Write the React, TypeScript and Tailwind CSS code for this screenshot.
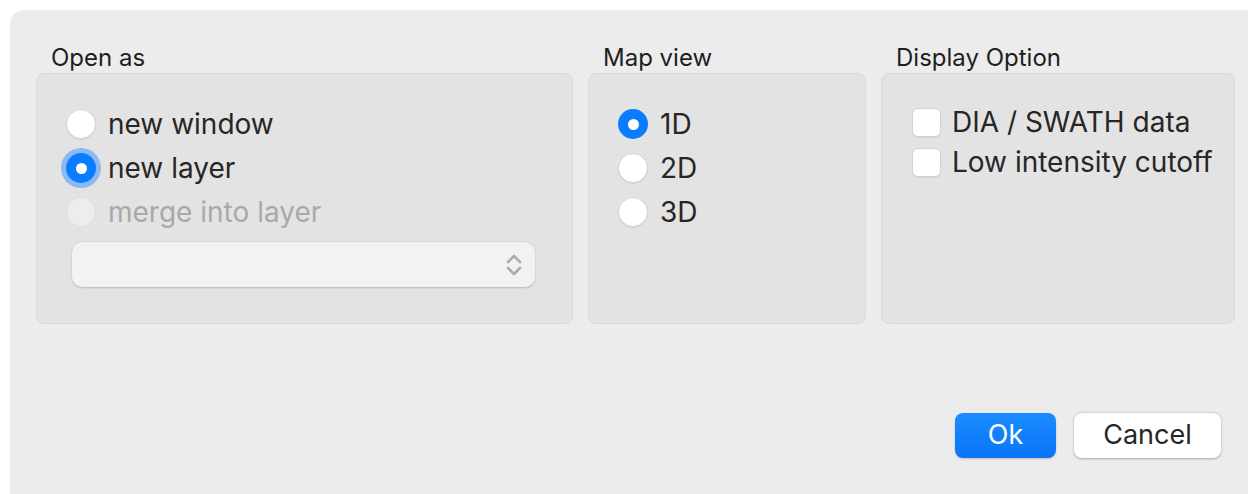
import React from 'react';

type RadioState = 'off' | 'on' | 'focused' | 'disabled';

const font = { fontFamily: 'Inter, "Liberation Sans", sans-serif' };

const Radio = ({ state }: { state: RadioState }) => {
  if (state === 'on' || state === 'focused') {
    return (
      <span
        className={`flex h-[30px] w-[30px] shrink-0 items-center justify-center rounded-full bg-[#0a7cff] ${
          state === 'focused' ? 'ring-[5px] ring-[#8cb9f3]' : ''
        }`}
      >
        <span className="h-[11px] w-[11px] rounded-full bg-white" />
      </span>
    );
  }
  if (state === 'disabled') {
    return <span className="h-[30px] w-[30px] shrink-0 rounded-full border border-[#dedede] bg-[#ededed]" />;
  }
  return (
    <span className="h-[30px] w-[30px] shrink-0 rounded-full border border-[#d4d4d4] bg-white shadow-[0_1px_1px_rgba(0,0,0,0.08)]" />
  );
};

const RadioRow = ({ label, state }: { label: string; state: RadioState }) => (
  <div className="flex h-[44px] items-center gap-[12px]">
    <Radio state={state} />
    <span className={`text-[28px] leading-none ${state === 'disabled' ? 'text-[#a9a9a9]' : 'text-[#262626]'}`}>
      {label}
    </span>
  </div>
);

const CheckRow = ({ label }: { label: string }) => (
  <div className="flex h-[40px] items-center gap-[11px]">
    <span className="h-[29px] w-[29px] shrink-0 rounded-[6px] border border-[#d4d4d4] bg-white shadow-[0_1px_1px_rgba(0,0,0,0.08)]" />
    <span className="text-[28px] leading-none text-[#262626]">{label}</span>
  </div>
);

const Group = ({ title, width, children }: { title: string; width: string; children: React.ReactNode }) => (
  <div className={`flex flex-col ${width}`}>
    <div className="h-[35px] pl-[15px] pt-[5px] text-[24px] leading-[30px] text-[#1e1e1e]">{title}</div>
    <div className="h-[251px] rounded-[8px] border border-[#d9d9d9] bg-[#e3e3e3]">{children}</div>
  </div>
);

const Chevrons = () => (
  <svg width="16" height="24" viewBox="0 0 16 24" fill="none" stroke="#ababab" strokeWidth="2.6" strokeLinecap="round" strokeLinejoin="round">
    <path d="M2 9 L8 3 L14 9" />
    <path d="M2 15 L8 21 L14 15" />
  </svg>
);

export default function App() {
  return (
    <div className="h-[494px] w-[1248px] overflow-hidden bg-white pl-[11px] pt-[11px]" style={font}>
      <div className="flex h-[500px] w-[1250px] flex-col rounded-[12px] bg-[#ececec] shadow-[0_0_0_1px_rgba(0,0,0,0.06)]">
        <div className="flex gap-[15px] pl-[25px] pt-[27px]">
          <Group title="Open as" width="w-[537px]">
            <div className="pl-[29px] pt-[28px]">
              <RadioRow label="new window" state="off" />
              <RadioRow label="new layer" state="focused" />
              <RadioRow label="merge into layer" state="disabled" />
            </div>
            <div className="ml-[35px] mt-[8px] flex h-[45px] w-[463px] items-center justify-end rounded-[10px] bg-[#f2f2f2] pr-[13px] shadow-[0_0.5px_2px_rgba(0,0,0,0.2)]">
              <Chevrons />
            </div>
          </Group>
          <Group title="Map view" width="w-[278px]">
            <div className="pl-[29px] pt-[28px]">
              <RadioRow label="1D" state="on" />
              <RadioRow label="2D" state="off" />
              <RadioRow label="3D" state="off" />
            </div>
          </Group>
          <Group title="Display Option" width="w-[354px]">
            <div className="pl-[30px] pt-[28px]">
              <CheckRow label="DIA / SWATH data" />
              <CheckRow label="Low intensity cutoff" />
            </div>
          </Group>
        </div>
        <div className="flex gap-[18px] pl-[944px] pt-[89px]">
          <button className="h-[45px] w-[101px] rounded-[8px] bg-gradient-to-b from-[#1a8cff] to-[#0a74f7] text-[27px] text-white shadow-[0_1px_2px_rgba(0,0,0,0.2)]">
            Ok
          </button>
          <button className="h-[45px] w-[147px] rounded-[8px] bg-white text-[27px] text-[#262626] shadow-[0_0.5px_2.5px_rgba(0,0,0,0.3)]">
            Cancel
          </button>
        </div>
      </div>
    </div>
  );
}
